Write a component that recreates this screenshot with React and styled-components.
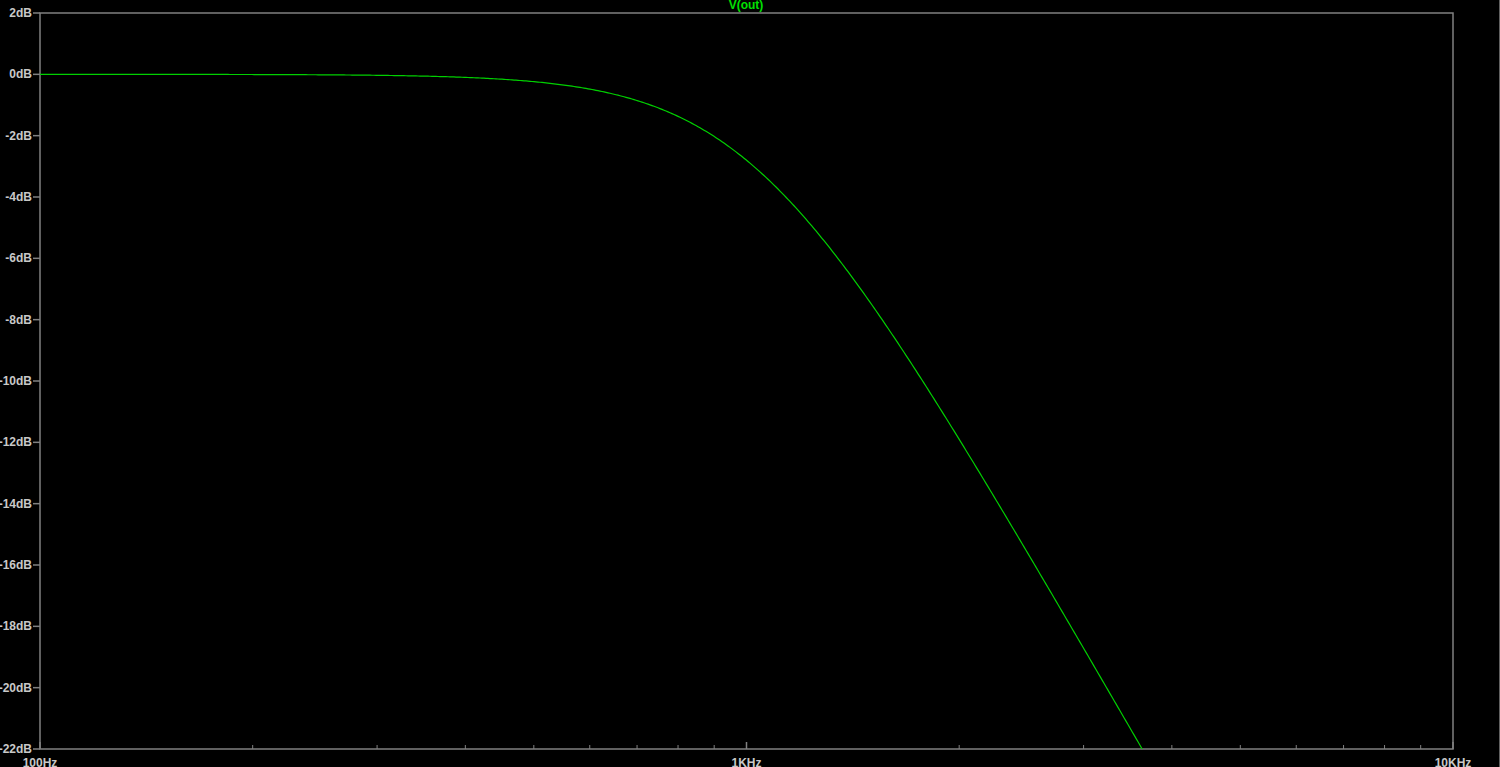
import styled, { createGlobalStyle } from "styled-components";

const Global = createGlobalStyle`
  html, body { margin: 0; padding: 0; background: #000; }
  body { font-family: "Liberation Sans", Arial, sans-serif; }
`;

const Screen = styled.div`
  width: 1500px;
  height: 767px;
  background: #000;
  overflow: hidden;
  border-right: 1px solid #606060;
  box-sizing: border-box;
`;

const Plot = styled.svg`
  display: block;
  text {
    font-family: "Liberation Sans", Arial, sans-serif;
    font-size: 12px;
    font-weight: bold;
  }
`;

const L = 40, R = 1453, T = 13, B = 749;
const DEC = (R - L) / 2;
const FC = 1025;
const xOf = (f) => L + Math.log10(f / 100) * DEC;
const yOf = (db) => T + ((2 - db) * (B - T)) / 24;

const curve = (() => {
  const pts = [];
  for (let px = L; px <= 1170; px += 2) {
    const f = 100 * Math.pow(10, (px - L) / DEC);
    const db = -10 * Math.log10(1 + Math.pow(f / FC, 4));
    pts.push(`${px},${yOf(db).toFixed(2)}`);
  }
  return pts.join(" ");
})();

const yTicks = Array.from({ length: 13 }, (_, i) => 2 - i * 2);
const minors = [];
[100, 1000].forEach((d) => {
  for (let k = 2; k <= 9; k++) minors.push(d * k);
});

export default function App() {
  return (
    <Screen>
      <Global />
      <Plot width="1499" height="767">
        <defs>
          <clipPath id="frame">
            <rect x={L} y={T} width={R - L} height={B - T} />
          </clipPath>
        </defs>
        <text x={746} y={9} fill="#00e000" textAnchor="middle">V(out)</text>
        <rect x={L} y={T} width={R - L} height={B - T} fill="none" stroke="#808080" strokeWidth="1.5" />
        {yTicks.map((db) => (
          <g key={db}>
            <line x1={L - 7} x2={L} y1={yOf(db)} y2={yOf(db)} stroke="#808080" strokeWidth="1.5" />
            <text x={L - 8} y={yOf(db) + 4} fill="#c8c8c8" textAnchor="end">{db}dB</text>
          </g>
        ))}
        {minors.map((f) => (
          <line key={f} x1={xOf(f)} x2={xOf(f)} y1={B} y2={B - 4} stroke="#808080" />
        ))}
        {[[100, "100Hz"], [1000, "1KHz"], [10000, "10KHz"]].map(([f, t]) => (
          <g key={f}>
            <line x1={xOf(f)} x2={xOf(f)} y1={B} y2={B - 7} stroke="#808080" strokeWidth="1.5" />
            <text x={xOf(f)} y={767} fill="#c8c8c8" textAnchor="middle">{t}</text>
          </g>
        ))}
        <polyline points={curve} fill="none" stroke="#00d000" strokeWidth="1.2" clipPath="url(#frame)" />
      </Plot>
    </Screen>
  );
}
